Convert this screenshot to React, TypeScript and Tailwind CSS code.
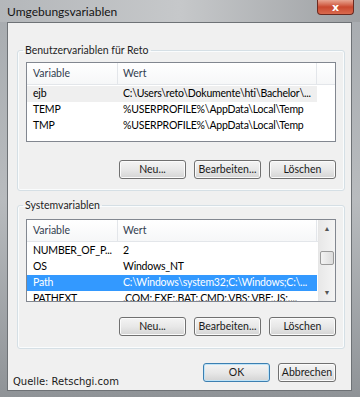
import React from "react";

const ui = { fontFamily: 'Lato, "Noto Sans", Arial, sans-serif' };

type Row = { name: string; value: string; sel?: "focus" | "soft" };

const userVars: Row[] = [
  { name: "ejb", value: "C:\\Users\\reto\\Dokumente\\hti\\Bachelor\\...", sel: "soft" },
  { name: "TEMP", value: "%USERPROFILE%\\AppData\\Local\\Temp" },
  { name: "TMP", value: "%USERPROFILE%\\AppData\\Local\\Temp" },
];

const sysVars: Row[] = [
  { name: "NUMBER_OF_P...", value: "2" },
  { name: "OS", value: "Windows_NT" },
  { name: "Path", value: "C:\\Windows\\system32;C:\\Windows;C:\\...", sel: "focus" },
  { name: "PATHEXT", value: ".COM;.EXE;.BAT;.CMD;.VBS;.VBE;.JS;...." },
];

const Btn = ({ label, def, w = "w-[67px]" }: { label: string; def?: boolean; w?: string }) => (
  <button
    className={`${w} h-[19px] rounded-[3px] border text-[10.5px] leading-none text-[#1a1a1a] bg-gradient-to-b from-[#f4f4f4] via-[#e8e8e8] to-[#d4d4d4] ${
      def
        ? "border-[#3c7fb1] shadow-[inset_0_0_0_1px_#bfe3f7]"
        : "border-[#707070] shadow-[inset_0_0_0_1px_#fbfbfb]"
    }`}
  >
    {label}
  </button>
);

const Header = () => (
  <div className="flex h-[22px] shrink-0 items-center border-b border-[#e3e6ea] bg-gradient-to-b from-white to-[#f6f7f8] text-[10.5px] text-[#33404f]">
    <div className="w-[91px] pl-[6px] border-r border-[#e3e6ea] h-full flex items-center">Variable</div>
    <div className="w-[199px] pl-[5px] border-r border-[#e3e6ea] h-full flex items-center">Wert</div>
    <div className="flex-1" />
  </div>
);

const Rows = ({ rows }: { rows: Row[] }) => (
  <div className="flex flex-col pt-[1px]">
    {rows.map((r) => (
      <div
        key={r.name}
        className={`flex h-[16px] items-center text-[10.5px] tracking-[-0.2px] w-[290px] ${
          r.sel === "focus"
            ? "bg-[#3399ff] text-white"
            : r.sel === "soft"
            ? "bg-[#efefef] text-black"
            : "text-black"
        }`}
      >
        <div className="w-[91px] pl-[6px] whitespace-nowrap overflow-hidden">{r.name}</div>
        <div className="flex-1 pl-[5px] whitespace-nowrap overflow-hidden">{r.value}</div>
      </div>
    ))}
  </div>
);

const Group = ({ title, children }: { title: string; children: React.ReactNode }) => (
  <fieldset className="border border-[#d5dfe5] rounded-[3px] px-[8px] shadow-[inset_0_0_0_1px_#fafcfd]">
    <legend className="-ml-[3px] px-[2px] text-[10.5px] leading-[14px] text-[#1e1e1e]">{title}</legend>
    {children}
  </fieldset>
);

const Buttons = () => (
  <div className="flex justify-end gap-[8px]">
    <Btn label="Neu..." />
    <Btn label="Bearbeiten..." />
    <Btn label="Löschen" />
  </div>
);

export default function App() {
  return (
    <div
      style={ui}
      className="w-[360px] h-[397px] flex flex-col bg-gradient-to-b from-[#a7abaf] via-[#b8bbbe] to-[#8f9397] overflow-hidden"
    >
      {/* title bar */}
      <div className="h-[22px] shrink-0 flex items-start justify-between bg-gradient-to-r from-[#b4b7ba] via-[#c6c8ca] to-[#9ea1a4]">
        <span className="pl-[7px] pt-[3px] text-[12px] text-[#141414]">Umgebungsvariablen</span>
        <div className="mr-[6px] w-[37px] h-[15px] rounded-b-[4px] border border-t-0 border-[#6b2a20] bg-gradient-to-b from-[#e7a592] via-[#c9482f] to-[#d96a4e] flex items-center justify-center">
          <span className="text-white font-bold text-[11px] leading-none" style={{ fontFamily: '"DejaVu Sans", sans-serif' }}>x</span>
        </div>
      </div>

      {/* client */}
      <div className="flex-1 ml-[7px] mr-[8px] mb-[6px] bg-[#f0f0f0] border border-[#6e7276] flex flex-col pl-[9px] pr-[6px] pt-[20px]">
        <Group title="Benutzervariablen für Reto">
          <div className="mt-[5px] h-[80px] border border-[#828790] bg-white flex flex-col">
            <Header />
            <Rows rows={userVars} />
          </div>
          <div className="mt-[18px] mb-[11px]">
            <Buttons />
          </div>
        </Group>

        <div className="mt-[7px]">
          <Group title="Systemvariablen">
            <div className="mt-[7px] h-[83px] border border-[#828790] bg-white flex overflow-hidden">
              <div className="flex-1 flex flex-col overflow-hidden">
                <Header />
                <Rows rows={sysVars} />
              </div>
              {/* scrollbar */}
              <div className="w-[17px] shrink-0 flex flex-col items-center bg-gradient-to-r from-[#e8e8e8] to-[#f4f4f4] border-l border-[#e6e6e6]">
                <div className="h-[17px] flex items-center justify-center text-[7px] text-[#555]">▲</div>
                <div className="mt-[14px] w-[14px] h-[14px] rounded-[2px] border border-[#9a9a9a] bg-gradient-to-r from-[#f3f3f3] to-[#dcdcdc]" />
                <div className="flex-1" />
                <div className="h-[17px] flex items-center justify-center text-[7px] text-[#555]">▼</div>
              </div>
            </div>
            <div className="mt-[15px] mb-[12px]">
              <Buttons />
            </div>
          </Group>
        </div>

        <div className="mt-[14px] flex items-start justify-between pr-[9px]">
          <span
            className="-ml-[4px] pt-[11px] text-[10px] text-[#1a1a1a]"
            style={{ fontFamily: '"DejaVu Sans", Verdana, sans-serif' }}
          >
            Quelle: Retschgi.com
          </span>
          <div className="flex gap-[8px]">
            <Btn label="OK" def />
            <Btn label="Abbrechen" w="w-[58px]" />
          </div>
        </div>
      </div>
    </div>
  );
}
